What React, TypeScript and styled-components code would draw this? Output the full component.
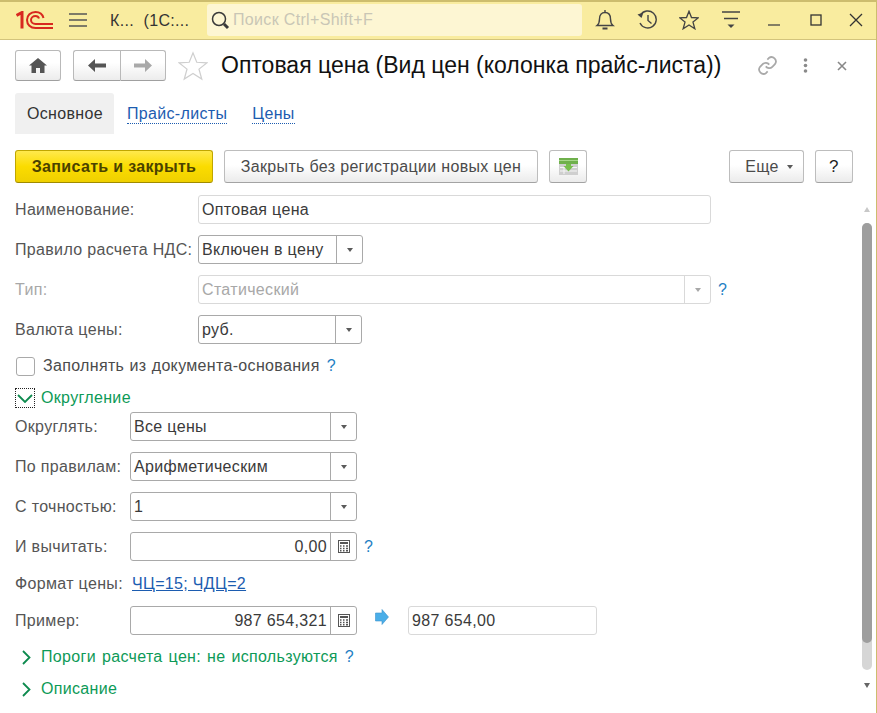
import styled, { createGlobalStyle } from 'styled-components';

const GlobalStyle = createGlobalStyle`
  html, body {
    margin: 0;
    padding: 0;
    background: #fff;
  }
  * {
    box-sizing: border-box;
  }
`;

const Window = styled.div`
  width: 877px;
  height: 713px;
  overflow: hidden;
  display: flex;
  flex-direction: column;
  background: #fff;
  border: solid #cdbd6e;
  border-width: 2px 1px 0 0;
  font-family: "Liberation Sans", Arial, sans-serif;
  font-size: 16px;
  letter-spacing: 0.33px;
  color: #4b4b4b;
`;

const TitleBar = styled.div`
  flex: none;
  height: 38px;
  padding-top: 2px;
  display: flex;
  align-items: flex-start;
  background: #f9ec9f;
  border-bottom: 1px solid #d3c47c;
`;

const TitleIcon = styled.div<{ $w: number; $left: number }>`
  flex: none;
  width: ${(p) => p.$w}px;
  margin-left: ${(p) => p.$left}px;
  height: 32px;
  display: flex;
  align-items: center;
  justify-content: center;
`;

const AppName = styled.div`
  flex: none;
  width: 83px;
  margin-left: 23px;
  height: 32px;
  line-height: 33px;
  color: #333;
  white-space: pre;
`;

const Search = styled.div`
  flex: none;
  width: 375px;
  height: 32px;
  margin-left: 14px;
  padding-left: 3px;
  display: flex;
  align-items: center;
  gap: 3px;
  background: #fdf6d3;
  border-radius: 3px;
  color: #c9c6b6;
`;

const Body = styled.div`
  flex: 1;
  min-height: 0;
  padding: 10px 0 0 15px;
`;

const HeaderRow = styled.div`
  height: 31px;
  display: flex;
  align-items: center;
`;

const NavButton = styled.div<{ $w: number }>`
  width: ${(p) => p.$w}px;
  height: 31px;
  display: flex;
  align-items: center;
  justify-content: center;
  background: linear-gradient(#fff 40%, #ececec);
  border: 1px solid #b9b9b9;
  border-bottom-color: #a0a0a0;
  border-radius: 3px;
`;

const NavGroup = styled.div`
  display: flex;
  margin: 0 12px;
  & > div:first-child {
    border-right-width: 0;
    border-radius: 3px 0 0 3px;
  }
  & > div:last-child {
    border-radius: 0 3px 3px 0;
  }
`;

const Title = styled.div`
  margin-left: 13px;
  font-size: 23px;
  letter-spacing: 0;
  color: #111;
  white-space: nowrap;
`;

const HeaderActions = styled.div`
  margin-left: 36px;
  display: flex;
  align-items: center;
`;

const Tabs = styled.div`
  margin-top: 12px;
  display: flex;
  height: 41px;
`;

const Tab = styled.div`
  line-height: 42px;
  padding: 0 11px 0 12px;
  border-radius: 3px 3px 0 0;
  background: #f0f0f0;
  color: #333;
`;

const TabLink = styled.a`
  margin-left: 13px;
  margin-right: 12px;
  align-self: center;
  color: #1c5cb0;
  line-height: 18px;
  margin-top: 2px;
  border-bottom: 1px dotted #1c5cb0;
`;

const CommandBar = styled.div`
  margin-top: 16px;
  height: 33px;
  display: flex;
`;

const Button = styled.div<{ $w: number; $left?: number }>`
  flex: none;
  width: ${(p) => p.$w}px;
  height: 33px;
  margin-left: ${(p) => p.$left ?? 0}px;
  display: flex;
  align-items: center;
  justify-content: center;
  gap: 8px;
  background: linear-gradient(#fff 45%, #ebebeb);
  border: 1px solid #bdbdbd;
  border-bottom-color: #a3a3a3;
  border-radius: 3px;
  color: #4b4b4b;
`;

const PrimaryButton = styled(Button)`
  background: linear-gradient(#ffe94d, #fbdc00 50%, #efd000);
  border-color: #c0a600;
  border-bottom-color: #a08b00;
  color: #4a4200;
  font-weight: bold;
`;

const MoreButton = styled(Button)`
  padding-left: 5px;
`;

const HelpButton = styled(Button)`
  color: #1f1f1f;
  font-size: 17px;
`;

const Content = styled.div`
  display: flex;
  height: 527px;
  margin-top: 6px;
`;

const Form = styled.div`
  flex: none;
  width: 847px;
  padding-top: 6px;
`;

const Row = styled.div<{ $top?: number }>`
  height: 29px;
  margin-top: ${(p) => p.$top ?? 11}px;
  display: flex;
  align-items: center;
`;

const Label = styled.div<{ $w: number; $muted?: boolean }>`
  flex: none;
  width: ${(p) => p.$w}px;
  color: ${(p) => (p.$muted ? '#a8a8a8' : '#555')};
  white-space: nowrap;
`;

const Field = styled.div<{ $w: number; $light?: boolean }>`
  flex: none;
  width: ${(p) => p.$w}px;
  height: 29px;
  display: flex;
  align-items: stretch;
  background: #fff;
  border: 1px solid ${(p) => (p.$light ? '#d9d9d9' : '#a9a9a9')};
  border-radius: 3px;
`;

const FieldText = styled.div<{ $right?: boolean; $muted?: boolean }>`
  flex: 1;
  padding: 0 3px;
  line-height: 27px;
  text-align: ${(p) => (p.$right ? 'right' : 'left')};
  color: ${(p) => (p.$muted ? '#a8a8a8' : '#3a3a3a')};
  white-space: nowrap;
`;

const FieldButton = styled.div<{ $light?: boolean }>`
  flex: none;
  width: 26px;
  display: flex;
  align-items: center;
  justify-content: center;
  border-left: 1px solid ${(p) => (p.$light ? '#d9d9d9' : '#a9a9a9')};
`;

const Caret = styled.div<{ $color?: string }>`
  width: 0;
  height: 0;
  border-left: 3.5px solid transparent;
  border-right: 3.5px solid transparent;
  border-top: 4px solid ${(p) => p.$color ?? '#5a5a5a'};
`;

const Hint = styled.span`
  margin-left: 7px;
  color: #1f7fc4;
`;

const CheckRow = styled.div`
  height: 20px;
  margin-top: 12px;
  display: flex;
  align-items: center;
  padding-left: 1px;
  word-spacing: 0.5px;
`;

const CheckBox = styled.div`
  width: 19px;
  height: 19px;
  margin-right: 8px;
  border: 1px solid #a9a9a9;
  border-radius: 3px;
`;

const Group = styled.div<{ $top: number; $left?: number }>`
  height: 20px;
  margin-top: ${(p) => p.$top}px;
  margin-left: ${(p) => p.$left ?? 0}px;
  display: flex;
  align-items: center;
  color: #0d9a57;
  word-spacing: 1.2px;
`;

const Focus = styled.div`
  width: 20px;
  height: 20px;
  margin-right: 6px;
  display: flex;
  align-items: center;
  justify-content: center;
  border: 1px dotted #222;
`;

const ChevronSlot = styled.div`
  flex: none;
  width: 20px;
  padding-left: 1px;
  display: flex;
`;

const FormatRow = styled.div`
  height: 20px;
  margin-top: 13px;
  display: flex;
  align-items: center;
`;

const FormatLink = styled.a`
  color: #1c5cb0;
  text-decoration: underline;
`;

const ArrowSlot = styled.div`
  flex: none;
  width: 51px;
  padding: 0 0 8px 18px;
  display: flex;
`;

const Scrollbar = styled.div`
  flex: none;
  width: 10px;
  padding-top: 34px;
  position: relative;
`;

const Track = styled.div`
  height: 447px;
  border-radius: 5px;
  background: #d6d6d6;
`;

const Thumb = styled.div`
  height: 420px;
  border-radius: 5px;
  background: #9e9e9e;
`;

const ScrollArrow = styled.div<{ $up?: boolean }>`
  position: absolute;
  left: 2px;
  top: ${(p) => (p.$up ? 18 : 494)}px;
  width: 0;
  height: 0;
  border-left: 3px solid transparent;
  border-right: 3px solid transparent;
  border-${(p) => (p.$up ? 'bottom' : 'top')}: 5px solid ${(p) => (p.$up ? '#c8c8c8' : '#666')};
`;

const Logo = () => (
  <svg width="37" height="18" viewBox="0 0 37 18" fill="none" stroke="#d8281f" strokeWidth="2">
    <path d="M0.500 4.500 L6 1.500 V17.500" strokeWidth="3" />
    <path d="M27.500 7 C26.500 3 23.500 1 19.500 1 C14.500 1 11 4.500 11 9 C11 13.500 14.500 17 19.500 17 H37" />
    <path d="M23 7.500 C22.500 6 21 5 19.500 5 C17 5 15 6.800 15 9 C15 11.200 17 13 19.500 13 H37" />
  </svg>
);

const Hamburger = () => (
  <svg width="18" height="16" viewBox="0 0 18 16" stroke="#555" strokeWidth="1.400">
    <path d="M0 2H18M0 8H18M0 14H18" />
  </svg>
);

const SearchIcon = () => (
  <svg width="20" height="20" viewBox="0 0 20 20" fill="none" stroke="#3a3a3a">
    <circle cx="9" cy="9" r="6.500" strokeWidth="1.500" />
    <path d="M14 14 L18 18" strokeWidth="3" />
  </svg>
);

const Bell = () => (
  <svg width="20" height="22" viewBox="0 0 20 22" fill="none" stroke="#444" strokeWidth="1.400">
    <path d="M2 16.500 C4 15 4.500 13 4.500 10 C4.500 6 6.500 3.500 10 3.500 C13.500 3.500 15.500 6 15.500 10 C15.500 13 16 15 18 16.500 Z" />
    <path d="M10 1 V3.500" />
    <path d="M7.500 19.500 H12.500" strokeWidth="2" />
  </svg>
);

const History = () => (
  <svg width="21" height="20" viewBox="0 0 21 20" fill="none" stroke="#444" strokeWidth="1.400">
    <path d="M3.500 5 A8.500 8.500 0 1 1 3 13" />
    <path d="M0.500 4.500 L4.500 8 L6.500 2.500 Z" fill="#444" stroke="none" />
    <path d="M11 5 V10.500 L14.500 13.500" />
  </svg>
);

const StarOutline = ({ size, color, width }: { size: number; color: string; width: number }) => (
  <svg width={size} height={size} viewBox="0 0 24 24" fill="none" stroke={color} strokeWidth={width} strokeLinejoin="miter">
    <path d="M12 1.500 L15 9 L23 9.500 L16.800 14.500 L19 22.500 L12 18 L5 22.500 L7.200 14.500 L1 9.500 L9 9 Z" />
  </svg>
);

const Filter = () => (
  <svg width="18" height="18" viewBox="0 0 18 18" stroke="#444" strokeWidth="1.300">
    <path d="M0 1H18M2 7.500H16" />
    <path d="M5.500 13.500 H12.500 L9 17 Z" fill="#444" stroke="none" />
  </svg>
);

const WindowMin = () => (
  <svg width="12" height="12" viewBox="0 0 12 12" stroke="#444" strokeWidth="1.300">
    <path d="M0 11H12" />
  </svg>
);

const WindowMax = () => (
  <svg width="12" height="12" viewBox="0 0 12 12" fill="none" stroke="#333" strokeWidth="1.300">
    <rect x="1" y="1" width="10" height="10" />
  </svg>
);

const WindowClose = () => (
  <svg width="14" height="14" viewBox="0 0 14 14" stroke="#333" strokeWidth="1.300">
    <path d="M1 1L13 13M13 1L1 13" />
  </svg>
);

const Home = () => (
  <svg width="18" height="15" viewBox="0 0 18 15" fill="#555">
    <path d="M9 0 L18 7.500 H15.500 V15 H11 V10 H7 V15 H2.500 V7.500 H0 Z" />
  </svg>
);

const NavArrow = ({ color, flip }: { color: string; flip?: boolean }) => (
  <svg width="18" height="13" viewBox="0 0 18 13" fill={color} transform={flip ? 'scale(-1 1)' : undefined}>
    <path d="M0 6.500 L7 0 V4.500 H18 V8.500 H7 V13 Z" />
  </svg>
);

const LinkIcon = () => (
  <svg width="21" height="21" viewBox="0 0 24 24" fill="none" stroke="#a9a9a9" strokeWidth="2">
    <path d="M10 13a5 5 0 0 0 7.500.5l3-3a5 5 0 0 0-7-7l-1.700 1.700" />
    <path d="M14 11a5 5 0 0 0-7.500-.5l-3 3a5 5 0 0 0 7 7l1.700-1.700" />
  </svg>
);

const Dots = () => (
  <svg width="5" height="15" viewBox="0 0 5 15" fill="#8a8a8a">
    <circle cx="2.500" cy="2" r="1.800" />
    <circle cx="2.500" cy="7.500" r="1.800" />
    <circle cx="2.500" cy="13" r="1.800" />
  </svg>
);

const SmallClose = () => (
  <svg width="10" height="10" viewBox="0 0 10 10" stroke="#888" strokeWidth="1.600">
    <path d="M1 1L9 9M9 1L1 9" />
  </svg>
);

const TableIcon = () => (
  <svg width="19" height="17" viewBox="0 0 19 17">
    <rect x="0" y="0" width="19" height="17" fill="#cfcfcf" />
    <rect x="0" y="0" width="19" height="6" fill="#6fb04c" />
    <path d="M0 2.500H19" stroke="#a6d88a" />
    <path d="M1 9.500H18M1 13H18" stroke="#f6f6f6" />
    <path d="M5 9.500V16" stroke="#f6f6f6" />
    <path d="M7 6 V8 H4.500 L9.500 13.500 L14.500 8 H12 V6 Z" fill="#77bf4c" />
  </svg>
);

const Calculator = () => (
  <svg width="12" height="13" viewBox="0 0 12 13">
    <rect x="0.500" y="0.500" width="11" height="12" fill="#fff" stroke="#555" />
    <rect x="2" y="2" width="8" height="2" fill="#555" />
    <path d="M2 6H3.500M5 6H6.500M8 6H10M2 8.500H3.500M5 8.500H6.500M8 8.500H10M2 10.800H3.500M5 10.800H6.500M8 10.800H10" stroke="#555" strokeWidth="1.400" />
  </svg>
);

const BlueArrow = () => (
  <svg width="14" height="16" viewBox="0 0 14 16" fill="#4aaee8" stroke="#3d94cf" strokeWidth="0.600">
    <path d="M0.500 4 H7 V0.500 L13.500 8 L7 15.500 V12 H0.500 Z" />
  </svg>
);

const GroupChevron = ({ down }: { down?: boolean }) => (
  <svg width={down ? 16 : 9} height={down ? 9 : 15} viewBox={down ? '0 0 16 9' : '0 0 9 15'} fill="none" stroke="#0d8a4e" strokeWidth="1.800">
    <path d={down ? 'M1 1 L8 8 L15 1' : 'M1 1 L7.500 7.500 L1 14'} />
  </svg>
);

const Select = ({ w, text, disabled }: { w: number; text: string; disabled?: boolean }) => (
  <Field $w={w} $light={disabled}>
    <FieldText $muted={disabled}>{text}</FieldText>
    <FieldButton $light={disabled}>
      <Caret $color={disabled ? '#a8a8a8' : undefined} />
    </FieldButton>
  </Field>
);

const NumberField = ({ value }: { value: string }) => (
  <Field $w={227}>
    <FieldText $right>{value}</FieldText>
    <FieldButton>
      <Calculator />
    </FieldButton>
  </Field>
);

export default function App() {
  return (
    <Window>
      <GlobalStyle />
      <TitleBar>
        <TitleIcon $w={37} $left={16}>
          <Logo />
        </TitleIcon>
        <TitleIcon $w={18} $left={16}>
          <Hamburger />
        </TitleIcon>
        <AppName>К...  (1С:...</AppName>
        <Search>
          <SearchIcon />
          Поиск Ctrl+Shift+F
        </Search>
        <TitleIcon $w={20} $left={13}>
          <Bell />
        </TitleIcon>
        <TitleIcon $w={21} $left={22}>
          <History />
        </TitleIcon>
        <TitleIcon $w={20} $left={21}>
          <StarOutline size={20} color="#444" width={1.6} />
        </TitleIcon>
        <TitleIcon $w={18} $left={23}>
          <Filter />
        </TitleIcon>
        <TitleIcon $w={12} $left={28}>
          <WindowMin />
        </TitleIcon>
        <TitleIcon $w={12} $left={30}>
          <WindowMax />
        </TitleIcon>
        <TitleIcon $w={14} $left={27}>
          <WindowClose />
        </TitleIcon>
      </TitleBar>
      <Body>
        <HeaderRow>
          <NavButton $w={46}>
            <Home />
          </NavButton>
          <NavGroup>
            <NavButton $w={47}>
              <NavArrow color="#555" />
            </NavButton>
            <NavButton $w={46}>
              <NavArrow color="#a9a9a9" flip />
            </NavButton>
          </NavGroup>
          <StarOutline size={30} color="#cfcfcf" width={1} />
          <Title>Оптовая цена (Вид цен (колонка прайс-листа))</Title>
          <HeaderActions>
            <LinkIcon />
            <TitleIcon $w={5} $left={25}>
              <Dots />
            </TitleIcon>
            <TitleIcon $w={10} $left={29}>
              <SmallClose />
            </TitleIcon>
          </HeaderActions>
        </HeaderRow>
        <Tabs>
          <Tab>Основное</Tab>
          <TabLink>Прайс-листы</TabLink>
          <TabLink>Цены</TabLink>
        </Tabs>
        <CommandBar>
          <PrimaryButton $w={198}>Записать и закрыть</PrimaryButton>
          <Button $w={314} $left={11}>Закрыть без регистрации новых цен</Button>
          <Button $w={38} $left={11}>
            <TableIcon />
          </Button>
          <MoreButton $w={75} $left={142}>
            Еще
            <Caret />
          </MoreButton>
          <HelpButton $w={38} $left={11}>?</HelpButton>
        </CommandBar>
        <Content>
          <Form>
            <Row $top={0}>
              <Label $w={183}>Наименование:</Label>
              <Field $w={513} $light>
                <FieldText>Оптовая цена</FieldText>
              </Field>
            </Row>
            <Row>
              <Label $w={183}>Правило расчета НДС:</Label>
              <Select w={165} text="Включен в цену" />
            </Row>
            <Row>
              <Label $w={183} $muted>Тип:</Label>
              <Select w={513} text="Статический" disabled />
              <Hint>?</Hint>
            </Row>
            <Row>
              <Label $w={183}>Валюта цены:</Label>
              <Select w={164} text="руб." />
            </Row>
            <CheckRow>
              <CheckBox />
              Заполнять из документа-основания
              <Hint>?</Hint>
            </CheckRow>
            <Group $top={12}>
              <Focus>
                <GroupChevron down />
              </Focus>
              Округление
            </Group>
            <Row $top={4}>
              <Label $w={115}>Округлять:</Label>
              <Select w={227} text="Все цены" />
            </Row>
            <Row>
              <Label $w={115}>По правилам:</Label>
              <Select w={227} text="Арифметическим" />
            </Row>
            <Row>
              <Label $w={115}>С точностью:</Label>
              <Select w={227} text="1" />
            </Row>
            <Row>
              <Label $w={115}>И вычитать:</Label>
              <NumberField value="0,00" />
              <Hint>?</Hint>
            </Row>
            <FormatRow>
              <Label $w={117}>Формат цены:</Label>
              <FormatLink>ЧЦ=15; ЧДЦ=2</FormatLink>
            </FormatRow>
            <Row $top={12}>
              <Label $w={115}>Пример:</Label>
              <NumberField value="987 654,321" />
              <ArrowSlot>
                <BlueArrow />
              </ArrowSlot>
              <Field $w={189} $light>
                <FieldText>987 654,00</FieldText>
              </Field>
            </Row>
            <Group $top={12} $left={6}>
              <ChevronSlot>
                <GroupChevron />
              </ChevronSlot>
              Пороги расчета цен: не используются
              <Hint>?</Hint>
            </Group>
            <Group $top={12} $left={6}>
              <ChevronSlot>
                <GroupChevron />
              </ChevronSlot>
              Описание
            </Group>
          </Form>
          <Scrollbar>
            <ScrollArrow $up />
            <Track>
              <Thumb />
            </Track>
            <ScrollArrow />
          </Scrollbar>
        </Content>
      </Body>
    </Window>
  );
}
